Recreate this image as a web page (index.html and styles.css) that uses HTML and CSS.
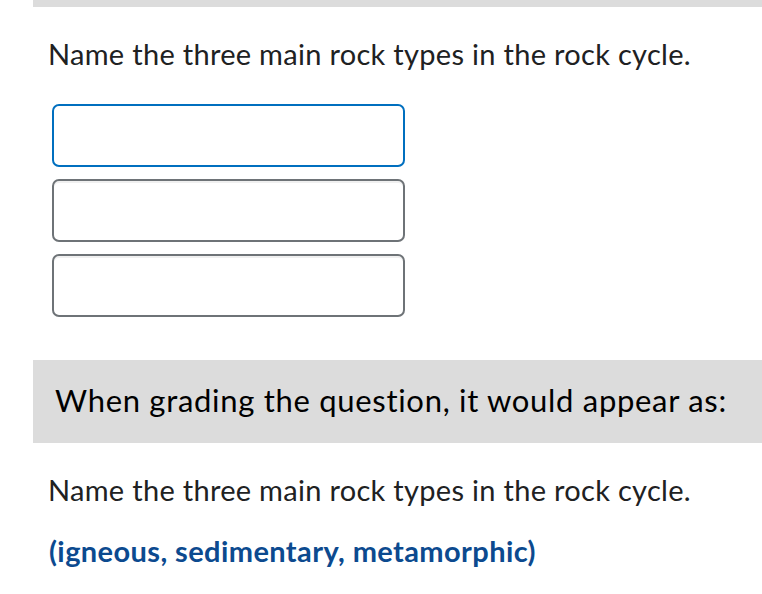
FILE: index.html
```html
<!DOCTYPE html>
<html lang="en">
<head>
<meta charset="utf-8">
<title>Question preview</title>
<link rel="stylesheet" href="styles.css">
</head>
<body>
<div class="page">
  <div class="topbar"></div>
  <p class="question">Name the three main rock types in the rock cycle.</p>
  <div class="inputs">
    <input class="field field-focus" type="text" aria-label="Answer 1">
    <input class="field" type="text" aria-label="Answer 2">
    <input class="field" type="text" aria-label="Answer 3">
  </div>
  <div class="band">When grading the question, it would appear as:</div>
  <p class="question question-lower">Name the three main rock types in the rock cycle.</p>
  <p class="answer">(igneous, sedimentary, metamorphic)</p>
</div>
</body>
</html>
```

FILE: styles.css
```css
html, body {
  margin: 0;
  padding: 0;
  background: #ffffff;
}
body {
  font-family: Lato, "Open Sans", sans-serif;
  color: #202122;
}
.page {
  padding-left: 33px;
}
.topbar {
  height: 7px;
  background: #dcdcdc;
}
.question {
  margin: 31px 0 0 15px;
  font-size: 29px;
  letter-spacing: 0.3px;
  line-height: 32px;
}
.inputs {
  margin: 34px 0 0 19px;
  width: 353px;
  display: flex;
  flex-direction: column;
  gap: 12px;
}
.field {
  box-sizing: border-box;
  height: 63px;
  width: 100%;
  margin: 0;
  padding: 0 12px;
  border: 2px solid #6e7377;
  border-radius: 7px;
  background: #ffffff;
  box-shadow: inset 0 2px 0 rgba(0, 0, 0, 0.06);
  font: inherit;
  outline: none;
}
.field-focus {
  border-color: #006fbf;
  box-shadow: none;
}
.band {
  margin-top: 43px;
  height: 83px;
  box-sizing: border-box;
  padding: 23px 0 0 22px;
  background: #dcdcdc;
  font-size: 31px;
  letter-spacing: 0.7px;
  line-height: 35px;
  color: #000;
}
.question-lower {
  margin-top: 31px;
}
.answer {
  margin: 29px 0 0 16px;
  font-size: 29px;
  letter-spacing: 0.4px;
  line-height: 32px;
  font-weight: 700;
  color: #0c4a8f;
}
```
